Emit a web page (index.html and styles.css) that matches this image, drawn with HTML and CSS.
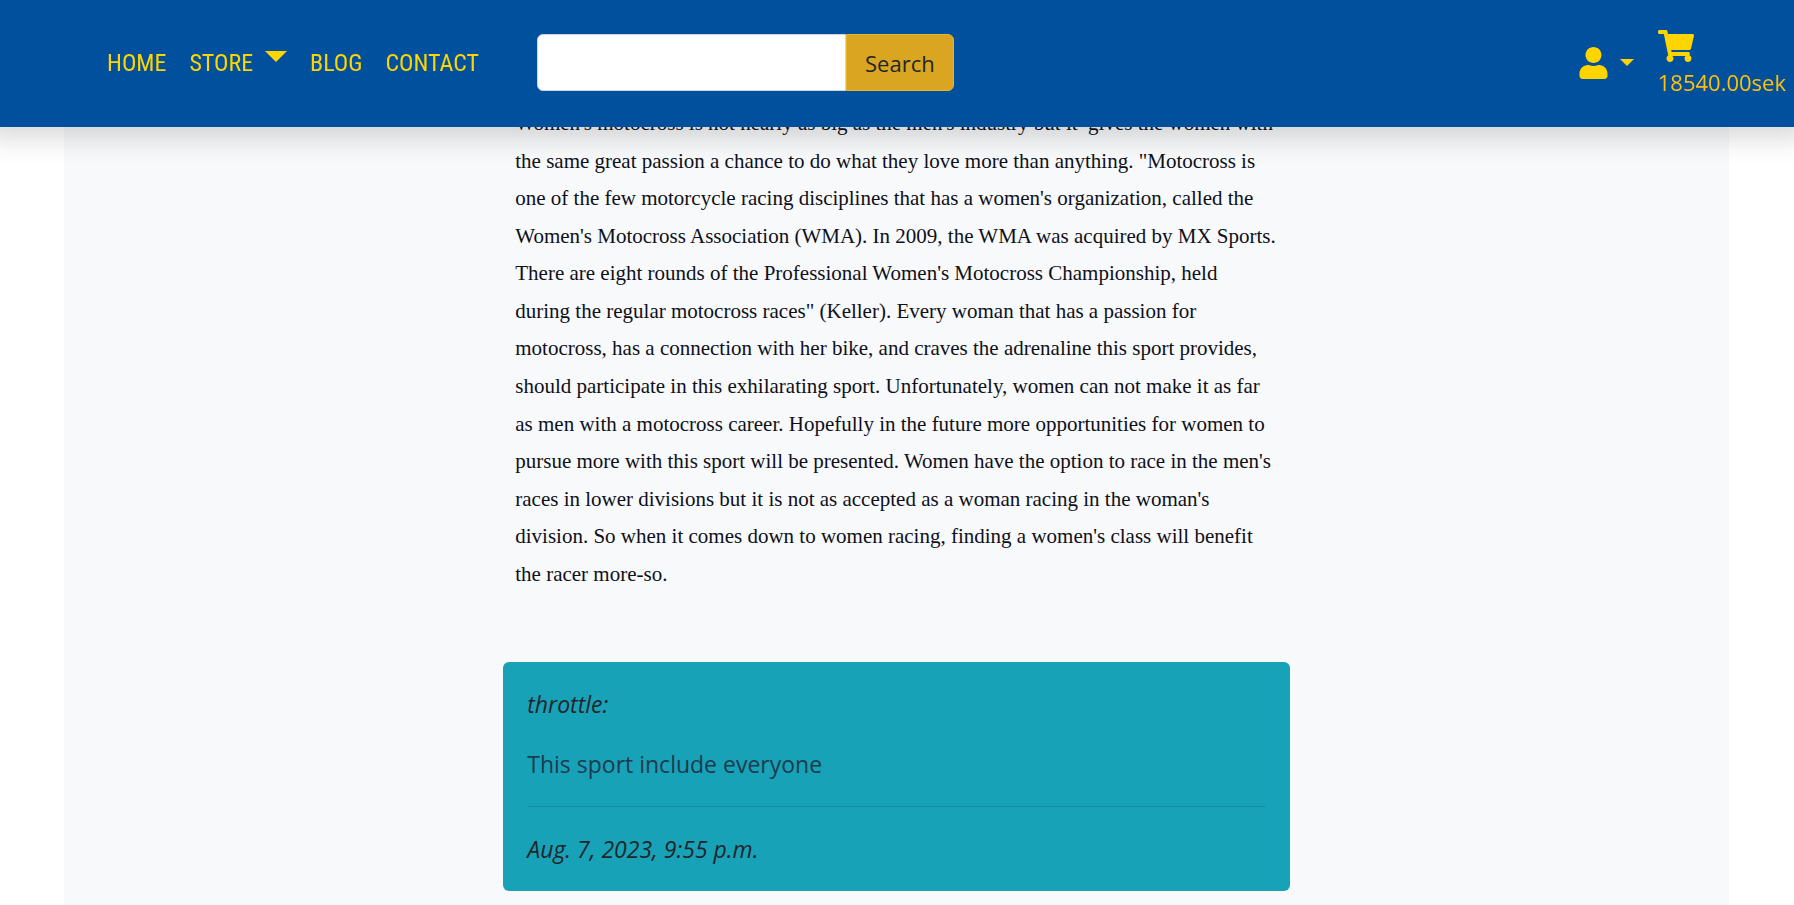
FILE: index.html
```html
<!DOCTYPE html>
<html lang="en">
<head>
<meta charset="utf-8">
<meta name="viewport" content="width=device-width, initial-scale=1">
<title>Blog</title>
<link rel="stylesheet" href="styles.css">
</head>
<body>
<header class="navbar">
  <nav class="nav-links">
    <a href="#">HOME</a>
    <button type="button" class="nav-toggle">STORE<span class="caret caret-large"></span></button>
    <a href="#">BLOG</a>
    <a href="#">CONTACT</a>
  </nav>
  <form class="search" role="search">
    <input type="search" class="search-input" aria-label="Search the store">
    <button type="submit" class="search-button">Search</button>
  </form>
  <div class="account">
    <button type="button" class="user-toggle" aria-label="My account">
      <svg class="icon-user" viewBox="0 0 448 512" aria-hidden="true"><path d="M224 256c70.7 0 128-57.3 128-128S294.7 0 224 0 96 57.3 96 128s57.3 128 128 128zm89.6 32h-16.7c-22.2 10.2-46.9 16-72.9 16s-50.6-5.8-72.9-16h-16.7C60.2 288 0 348.2 0 422.4V464c0 26.500 21.500 48 48 48h352c26.500 0 48-21.500 48-48v-41.600c0-74.200-60.200-134.400-134.400-134.400z"/></svg>
      <span class="caret"></span>
    </button>
    <a href="#" class="cart">
      <svg class="icon-cart" viewBox="0 0 576 512" aria-hidden="true"><path d="M528.120 301.319l47.273-208C578.806 78.301 567.391 64 551.990 64H159.208l-9.166-44.810C147.758 8.021 137.930 0 126.529 0H24C10.745 0 0 10.745 0 24v16c0 13.255 10.745 24 24 24h69.883l70.248 343.435C147.325 417.100 136 435.222 136 456c0 30.928 25.072 56 56 56s56-25.072 56-56c0-15.674-6.447-29.835-16.824-40h209.647C430.447 426.165 424 440.326 424 456c0 30.928 25.072 56 56 56s56-25.072 56-56c0-22.172-12.888-41.332-31.579-50.405l5.517-24.276c3.413-15.018-8.002-29.319-23.403-29.319H218.117l-6.545-32h293.145c11.206 0 20.920-7.754 23.403-18.681z"/></svg>
      <span>18540.00sek</span>
    </a>
  </div>
</header>
<main class="page">
  <div class="column">
    <article class="post">
      Women's motocross is not nearly as big as the men's industry but it&nbsp; gives the women with<br>
      the same great passion a chance to do what they love more than anything. "Motocross is<br>
      one of the few motorcycle racing disciplines that has a women's organization, called the<br>
      Women's Motocross Association (WMA). In 2009, the WMA was acquired by MX Sports.<br>
      There are eight rounds of the Professional Women's Motocross Championship, held<br>
      during the regular motocross races" (Keller). Every woman that has a passion for<br>
      motocross, has a connection with her bike, and craves the adrenaline this sport provides,<br>
      should participate in this exhilarating sport. Unfortunately, women can not make it as far<br>
      as men with a motocross career. Hopefully in the future more opportunities for women to<br>
      pursue more with this sport will be presented. Women have the option to race in the men's<br>
      races in lower divisions but it is not as accepted as a woman racing in the woman's<br>
      division. So when it comes down to women racing, finding a women's class will benefit<br>
      the racer more-so.
    </article>
    <section class="comment">
      <p><em>throttle:</em></p>
      <p class="comment-text">This sport include everyone</p>
      <hr>
      <p><em>Aug. 7, 2023, 9:55 p.m.</em></p>
    </section>
  </div>
</main>
</body>
</html>
```
FILE: styles.css
```css
* { box-sizing: border-box; }

body {
  margin: 0;
  background: #fff;
  color: #212529;
  font: 23px/36px "Open Sans", "Noto Sans", sans-serif;
}

button, input { font: inherit; }
a { color: inherit; text-decoration: none; }
p { margin: 0; }

.navbar {
  position: fixed;
  top: 0;
  left: 0;
  right: 0;
  z-index: 10;
  display: flex;
  align-items: center;
  min-height: 127px;
  padding: 0 8px 2px 107px;
  background: #00509d;
  color: #ffd500;
  font-size: 22px;
  box-shadow: 0 0 24px 12px rgba(0, 0, 0, .15);
}

.nav-links {
  display: flex;
  align-items: center;
  gap: 23px;
  margin-right: 58px;
  font-family: "Roboto Condensed", Roboto, sans-serif;
  font-size: 24px;
}

.nav-toggle, .user-toggle {
  display: flex;
  align-items: center;
  padding: 0;
  border: 0;
  background: none;
  color: inherit;
  cursor: pointer;
}

.nav-toggle { gap: 12px; }
.user-toggle { gap: 12px; }

.caret {
  border: 7px solid transparent;
  border-top-color: currentColor;
  border-bottom: 0;
}

.caret-large {
  border-width: 11px 11px 0;
  margin-bottom: 12px;
}

.search { display: flex; }

.search-input {
  width: 309px;
  height: 57px;
  padding: 8px 18px;
  border: 1px solid #ced4da;
  border-radius: 6px 0 0 6px;
  background: #fff;
}

.search-button {
  padding: 0 18px;
  border: 1px solid #e9b52b;
  border-radius: 0 6px 6px 0;
  background: #daa520;
  color: #212529;
}

.account {
  display: flex;
  align-items: center;
  gap: 24px;
  margin-left: auto;
}

.cart {
  display: flex;
  flex-direction: column;
  gap: 2px;
  padding-top: 4px;
  color: #ffc107;
}

.icon-user { width: 29px; height: 32px; fill: #ffd500; }
.icon-cart { width: 36px; height: 32px; fill: #ffd500; }

.page {
  display: flex;
  justify-content: center;
  min-height: 100vh;
  margin: 0 65px 0 64px;
  padding: 105px 0 14px;
  background: #f8f9fa;
}

.column {
  width: 50%;
  padding: 0 23px;
}

.post {
  padding: 0 12px;
  margin-bottom: 68px;
  font-family: "Liberation Serif", "Times New Roman", serif;
  font-size: 21px;
  line-height: 1.79;
  white-space: nowrap;
  color: #0e101a;
}

.comment {
  display: flex;
  flex-direction: column;
  gap: 24px;
  padding: 24px;
  border-radius: 6px;
  background: #17a2b8;
}

.comment-text { color: #1d3b4d; }

.comment hr {
  width: 100%;
  margin: 0;
  border: 0;
  border-top: 1px solid rgba(0, 0, 0, .1);
}
```
